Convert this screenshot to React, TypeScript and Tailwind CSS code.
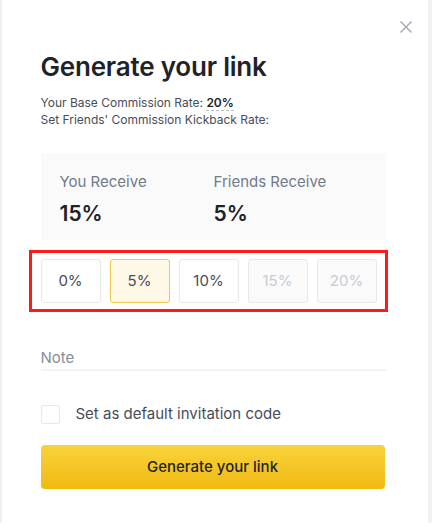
import React, { useState } from "react";

const rates = [0, 5, 10, 15, 20];

const App = () => {
  const [kickback, setKickback] = useState(5);
  const [note, setNote] = useState("");
  const [isDefault, setIsDefault] = useState(false);

  return (
    <div className="w-[432px] h-[532px] bg-white font-['Inter','Liberation_Sans',sans-serif]">
      <div className="flex h-[523px]">
        <div className="w-[2px] bg-[#eef0f2]" />

        {/* MODAL CARD */}
        <div className="flex-1 bg-white pl-[39px] pr-[40px]">
          <div className="flex justify-end pt-[20px] -mr-[25px]">
            <button className="text-[#a0a6ae] hover:text-[#707a8a]">
              <svg width="14" height="14" viewBox="0 0 14 14" fill="none">
                <path d="M1.5 1.5L12.5 12.5M12.5 1.5L1.5 12.5" stroke="currentColor" strokeWidth="1.4" />
              </svg>
            </button>
          </div>

          <h1 className="mt-[16px] text-[26px] leading-[34px] font-semibold text-[#1e2329] tracking-[-0.2px]">
            Generate your link
          </h1>
          <p className="mt-[10px] text-[12px] leading-[17px] text-[#474d57]">
            Your Base Commission Rate:{" "}
            <span className="font-semibold text-[#1e2329] border-b border-dashed border-[#b7bdc6]">20%</span>
          </p>
          <p className="text-[12px] leading-[17px] text-[#474d57]">Set Friends' Commission Kickback Rate:</p>

          {/* RECEIVE SUMMARY */}
          <div className="mt-[25px] w-[345px] h-[87px] bg-[#fafafa] flex pl-[19px] pt-[19px]">
            <div className="w-[154px]">
              <div className="text-[15px] leading-[20px] text-[#707a8a]">You Receive</div>
              <div className="mt-[8px] text-[21px] leading-[28px] font-semibold text-[#1e2329]">{20 - kickback}%</div>
            </div>
            <div>
              <div className="text-[15px] leading-[20px] text-[#707a8a]">Friends Receive</div>
              <div className="mt-[8px] text-[21px] leading-[28px] font-semibold text-[#1e2329]">{kickback}%</div>
            </div>
          </div>

          {/* KICKBACK OPTIONS */}
          <div className="mt-[10px] -ml-[12px] w-[359px] h-[62px] border-[3px] border-[#ff1a1a] flex items-center gap-[9px] pl-[9px]">
            {rates.map((r) => {
              const disabled = r > 10;
              const active = r === kickback;
              return (
                <button
                  key={r}
                  disabled={disabled}
                  onClick={() => setKickback(r)}
                  className={
                    active
                      ? "w-[60px] h-[44px] rounded-[3px] border border-[#f0c74b] bg-[#fef8e7] text-[15px] text-[#474d57]"
                      : disabled
                      ? "w-[60px] h-[44px] rounded-[3px] border border-[#e6e8ea] bg-[#fafafa] text-[15px] text-[#c7ccd3]"
                      : "w-[60px] h-[44px] rounded-[3px] border border-[#e6e8ea] bg-white text-[15px] text-[#474d57]"
                  }
                >
                  {r}%
                </button>
              );
            })}
          </div>

          {/* NOTE */}
          <input
            value={note}
            onChange={(e) => setNote(e.target.value)}
            placeholder="Note"
            className="mt-[33px] w-[345px] h-[26px] text-[15px] text-[#1e2329] placeholder-[#848e9c] border-b-2 border-[#f2f3f5] outline-none bg-transparent"
          />

          {/* DEFAULT CHECKBOX */}
          <label className="mt-[33px] flex items-center gap-[16px] cursor-pointer">
            <span
              onClick={() => setIsDefault(!isDefault)}
              className={
                isDefault
                  ? "w-[19px] h-[19px] rounded-[2px] border border-[#f0b90b] bg-[#f0b90b]"
                  : "w-[19px] h-[19px] rounded-[2px] border border-[#e6e8ea] bg-white"
              }
            />
            <span className="text-[15px] leading-[20px] text-[#474d57]">Set as default invitation code</span>
          </label>

          <button className="mt-[21px] w-[344px] h-[44px] rounded-[4px] bg-gradient-to-b from-[#f8d33a] to-[#f0b90b] text-[15px] font-medium text-[#1e2329]">
            Generate your link
          </button>
        </div>

        <div className="w-[6px] bg-[#f0f1f3]" />
      </div>
    </div>
  );
};

export default App;
